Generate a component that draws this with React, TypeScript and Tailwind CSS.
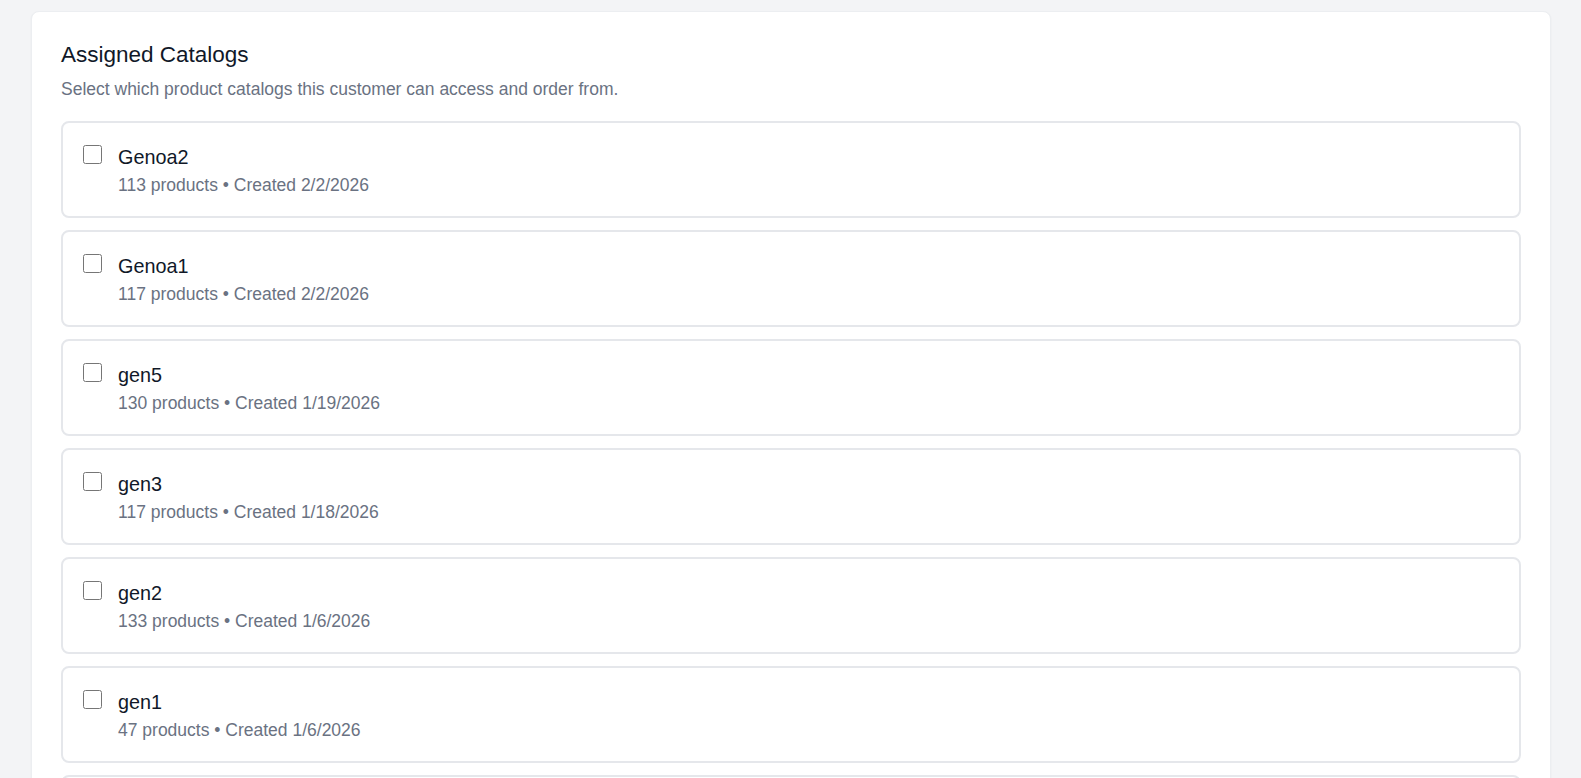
import { useState } from "react"

const catalogs = [
  { id: "genoa2", name: "Genoa2", products: 113, created: "2/2/2026" },
  { id: "genoa1", name: "Genoa1", products: 117, created: "2/2/2026" },
  { id: "gen5", name: "gen5", products: 130, created: "1/19/2026" },
  { id: "gen3", name: "gen3", products: 117, created: "1/18/2026" },
  { id: "gen2", name: "gen2", products: 133, created: "1/6/2026" },
  { id: "gen1", name: "gen1", products: 47, created: "1/6/2026" },
  { id: "gen0", name: "gen0", products: 52, created: "1/5/2026" },
]

export default function App() {
  const [selected, setSelected] = useState<string[]>([])

  const toggle = (id: string) => {
    setSelected((prev) => (prev.includes(id) ? prev.filter((x) => x !== id) : [...prev, id]))
  }

  return (
    <div
      className="min-h-screen bg-[#f3f4f6] pl-[31px] pr-[30px] pt-[11px]"
      style={{ fontFamily: '"Liberation Sans", Arial, sans-serif' }}
    >
      <div className="bg-white rounded-lg shadow-[0_1px_2px_rgba(0,0,0,0.06)] border border-[#eceef1] p-[29px]">
        <h2 className="text-[22.5px] leading-[28px] text-gray-900">Assigned Catalogs</h2>
        <p className="mt-[8px] text-[17.5px] leading-[24px] text-gray-500">
          Select which product catalogs this customer can access and order from.
        </p>

        <div className="mt-[20px] flex flex-col gap-3">
          {catalogs.map((c) => (
            <label
              key={c.id}
              className="flex items-start gap-[16px] border-2 border-[#e5e7eb] rounded-lg px-[20px] pt-[21px] pb-[19px] cursor-pointer"
            >
              <input
                type="checkbox"
                checked={selected.includes(c.id)}
                onChange={() => toggle(c.id)}
                className="m-0 mt-[1px] w-[19px] h-[19px] shrink-0"
              />
              <div>
                <div className="text-[19.8px] leading-[26px] text-gray-900">{c.name}</div>
                <div className="mt-[3px] text-[17.5px] leading-[24px] text-gray-500">
                  {c.products} products • Created {c.created}
                </div>
              </div>
            </label>
          ))}
        </div>
      </div>
    </div>
  )
}
